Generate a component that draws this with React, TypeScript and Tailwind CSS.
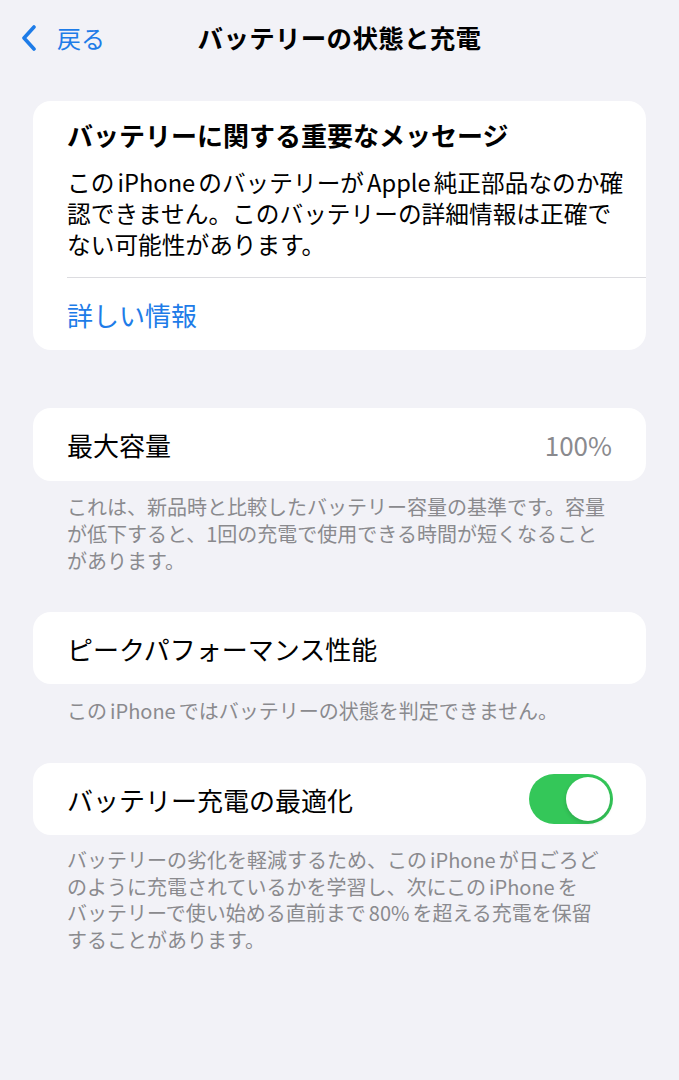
const font = { fontFamily: '"Noto Sans CJK JP", "Noto Sans", sans-serif' };

function Chevron() {
	return (
		<svg width="16" height="26" viewBox="0 0 16 26" fill="none">
			<path d="M13 2 L3 13 L13 24" stroke="#1e7ce8" strokeWidth="3.6" strokeLinecap="round" strokeLinejoin="round" />
		</svg>
	);
}

function Toggle() {
	return (
		<div className="w-[84px] h-[50px] rounded-full bg-[#34c759] p-[3px] flex justify-end">
			<div className="w-[44px] h-[44px] rounded-full bg-white shadow-[0_2px_4px_rgba(0,0,0,0.15)]" />
		</div>
	);
}

// Latin words inside Japanese text get a little air on each side, like iOS
function L({ children }: { children: React.ReactNode }) {
	return <span className="px-[3px]">{children}</span>;
}

function Lines({ lines, className }: { lines: React.ReactNode[]; className: string }) {
	return (
		<div className={className}>
			{lines.map((line, i) => (
				<div key={i} className="whitespace-nowrap">
					{line}
				</div>
			))}
		</div>
	);
}

function Footer({ lines, lh = 'leading-[27px]' }: { lines: React.ReactNode[]; lh?: string }) {
	return <Lines lines={lines} className={`px-[67px] text-[20px] ${lh} text-[#8a8a8e]`} />;
}

export default function App() {
	return (
		<div className="w-[679px] h-[1080px] bg-[#f2f2f7] text-black overflow-hidden" style={font}>
			<div className="h-[75px] grid grid-cols-[1fr_auto_1fr] items-center">
				<div className="flex items-center pl-[21px] gap-[20px] text-[#1e7ce8] text-[24px]">
					<Chevron />
					<span>戻る</span>
				</div>
				<div className="text-[25.5px] font-bold tracking-[0.3px]">バッテリーの状態と充電</div>
				<div />
			</div>

			<div className="px-[33px] pt-[26px]">
				<div className="bg-white rounded-[18px] pl-[34px]">
					<div className="pt-[17px]">
						<div className="text-[26px] leading-[34px] font-bold">バッテリーに関する重要なメッセージ</div>
						<Lines
							className="mt-[15px] text-[23.7px] leading-[31px]"
							lines={[
								<>
									この<L>iPhone</L>のバッテリーが<L>Apple</L>純正部品なのか確
								</>,
								'認できません。このバッテリーの詳細情報は正確で',
								'ない可能性があります。',
							]}
						/>
					</div>
					<div className="mt-[17px] border-t border-[#dcdce0] h-[73px] flex items-center text-[26px] text-[#1e7ce8]">
						詳しい情報
					</div>
				</div>

				<div className="mt-[58px] bg-white rounded-[18px] h-[73px] px-[34px] flex items-center justify-between text-[26px]">
					<span>最大容量</span>
					<span className="text-[#8a8a8e] text-[26px]">100%</span>
				</div>
			</div>
			<div className="pt-[12px]">
				<Footer
					lines={[
						'これは、新品時と比較したバッテリー容量の基準です。容量',
						'が低下すると、1回の充電で使用できる時間が短くなること',
						'があります。',
					]}
				/>
			</div>

			<div className="px-[33px] pt-[38px]">
				<div className="bg-white rounded-[18px] h-[72px] px-[34px] flex items-center text-[26px]">
					<span>ピークパフォーマンス性能</span>
				</div>
			</div>
			<div className="pt-[13px]">
				<Footer
					lines={[
						<>
							この<L>iPhone</L>ではバッテリーの状態を判定できません。
						</>,
					]}
				/>
			</div>

			<div className="px-[33px] pt-[39px]">
				<div className="bg-white rounded-[18px] h-[72px] pl-[34px] pr-[33px] flex items-center justify-between text-[26px]">
					<span>バッテリー充電の最適化</span>
					<Toggle />
				</div>
			</div>
			<div className="pt-[12px]">
				<Footer
					lh="leading-[26.5px]"
					lines={[
						<>
							バッテリーの劣化を軽減するため、この<L>iPhone</L>が日ごろど
						</>,
						<>
							のように充電されているかを学習し、次にこの<L>iPhone</L>を
						</>,
						<>
							バッテリーで使い始める直前まで<L>80%</L>を超える充電を保留
						</>,
						'することがあります。',
					]}
				/>
			</div>
		</div>
	);
}
